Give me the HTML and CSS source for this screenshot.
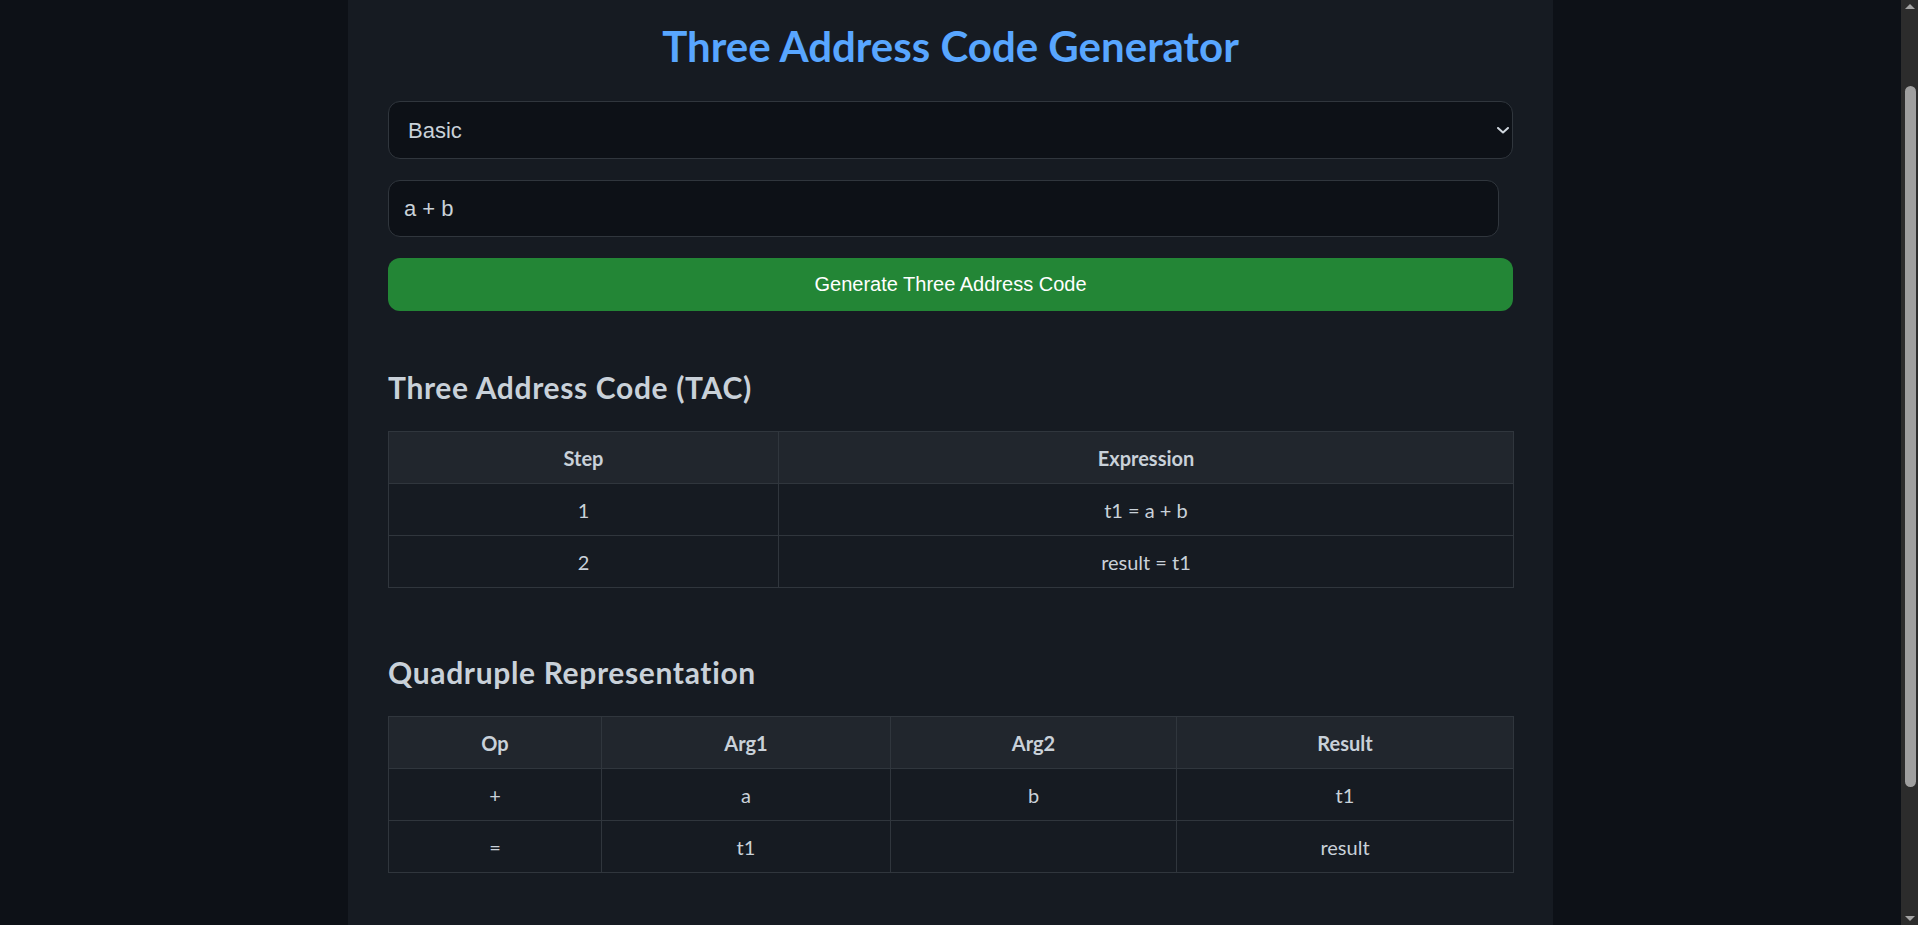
FILE: index.html
```html
<!DOCTYPE html>
<html lang="en">
<head>
<meta charset="utf-8">
<title>Three Address Code Generator</title>
<link rel="stylesheet" href="styles.css">
</head>
<body>
<div class="container">
  <h1 class="title">Three Address Code Generator</h1>

  <div class="select-wrap">
    <select class="mode-select">
      <option selected>Basic</option>
      <option>Arithmetic</option>
      <option>Conditional</option>
      <option>Loop</option>
    </select>
    <svg class="select-arrow" width="12" height="7" viewBox="0 0 12 7" aria-hidden="true">
      <polyline points="1,1 6,5.5 11,1" fill="none" stroke="#d0d7de" stroke-width="2" stroke-linecap="round" stroke-linejoin="round"/>
    </svg>
  </div>

  <input class="expr-input" type="text" value="a + b">

  <button class="generate-btn" type="button">Generate Three Address Code</button>

  <section class="result-section">
    <h2 class="section-title">Three Address Code (TAC)</h2>
    <table class="data-table">
      <colgroup>
        <col class="col-step">
        <col class="col-expr">
      </colgroup>
      <thead>
        <tr><th>Step</th><th>Expression</th></tr>
      </thead>
      <tbody>
        <tr><td>1</td><td>t1 = a + b</td></tr>
        <tr><td>2</td><td>result = t1</td></tr>
      </tbody>
    </table>
  </section>

  <section class="result-section">
    <h2 class="section-title">Quadruple Representation</h2>
    <table class="data-table">
      <colgroup>
        <col class="col-op">
        <col class="col-arg1">
        <col class="col-arg2">
        <col class="col-result">
      </colgroup>
      <thead>
        <tr><th>Op</th><th>Arg1</th><th>Arg2</th><th>Result</th></tr>
      </thead>
      <tbody>
        <tr><td>+</td><td>a</td><td>b</td><td>t1</td></tr>
        <tr><td>=</td><td>t1</td><td></td><td>result</td></tr>
      </tbody>
    </table>
  </section>
</div>

<div class="scrollbar" aria-hidden="true">
  <div class="sb-btn sb-up"><span class="sb-tri-up"></span></div>
  <div class="sb-track"><div class="sb-thumb"></div></div>
  <div class="sb-btn sb-down"><span class="sb-tri-down"></span></div>
</div>
</body>
</html>
```

FILE: styles.css
```css
html {
  background: #0d1117;
}

body {
  margin: 0;
  padding-right: 17px;
  background: #0d1117;
  color: #c9d1d9;
  font-family: Lato, "Open Sans", sans-serif;
}

.container {
  width: 1125px;
  margin: 0 auto;
  padding: 21px 40px 80px;
  background: #161b22;
}

.title {
  margin: 0 0 30px;
  font-size: 42px;
  line-height: 50px;
  font-weight: 700;
  color: #58a6ff;
  text-align: center;
}

.select-wrap {
  position: relative;
  margin-bottom: 21px;
}

.mode-select {
  display: block;
  box-sizing: border-box;
  width: 100%;
  height: 58px;
  padding: 0 15px 0 19px;
  border: 1px solid #30363d;
  border-radius: 12px;
  background: #0d1117;
  color: #c9d1d9;
  font-family: "Liberation Sans", Arial, sans-serif;
  font-size: 22px;
  -webkit-appearance: none;
  appearance: none;
  outline: none;
}

.select-arrow {
  position: absolute;
  right: 4px;
  top: 26px;
  pointer-events: none;
}

.expr-input {
  display: block;
  box-sizing: border-box;
  width: calc(100% - 14px);
  height: 57px;
  margin: 0 0 21px;
  padding: 0 15px;
  border: 1px solid #30363d;
  border-radius: 12px;
  background: #0d1117;
  color: #c9d1d9;
  font-family: "Liberation Sans", Arial, sans-serif;
  font-size: 22px;
  outline: none;
}

.generate-btn {
  display: block;
  box-sizing: border-box;
  width: 100%;
  height: 53px;
  padding: 0;
  border: none;
  border-radius: 12px;
  background: #238636;
  color: #ffffff;
  font-family: "Liberation Sans", Arial, sans-serif;
  font-size: 20px;
  cursor: pointer;
}

.result-section {
  margin-top: 59px;
}

.result-section + .result-section {
  margin-top: 67px;
}

.section-title {
  margin: 0 0 27px;
  font-size: 30px;
  line-height: 34px;
  letter-spacing: 0.65px;
  font-weight: 700;
  color: #c9d1d9;
}

.data-table {
  width: 100%;
  table-layout: fixed;
  border-collapse: collapse;
  font-size: 20px;
  line-height: 27px;
  color: #c9d1d9;
}

.data-table th,
.data-table td {
  border: 1px solid #30363d;
  padding: 13px 12px 11px;
  text-align: center;
  font-weight: 400;
}

.data-table th {
  background: #21262d;
  font-weight: 700;
}

.data-table td {
  background: #161b22;
}

.col-step { width: 390px; }
.col-expr { width: 735px; }
.col-op { width: 213px; }
.col-arg1 { width: 289px; }
.col-arg2 { width: 286px; }
.col-result { width: 337px; }

/* decorative window scrollbar, drawn over the page edge */
.scrollbar {
  position: fixed;
  top: 0;
  right: 0;
  width: 17px;
  height: 100%;
  display: flex;
  flex-direction: column;
  background: #2c2c2c;
}

.sb-btn {
  height: 17px;
  display: flex;
  justify-content: center;
  flex: none;
}

.sb-up {
  align-items: flex-start;
  padding-top: 4px;
  box-sizing: border-box;
}

.sb-down {
  align-items: flex-start;
  padding-top: 8px;
  box-sizing: border-box;
}

.sb-tri-up {
  width: 0;
  height: 0;
  border-left: 5px solid transparent;
  border-right: 5px solid transparent;
  border-bottom: 5px solid #a3a3a3;
}

.sb-tri-down {
  width: 0;
  height: 0;
  border-left: 5px solid transparent;
  border-right: 5px solid transparent;
  border-top: 5px solid #a3a3a3;
}

.sb-track {
  flex: 1;
}

.sb-thumb {
  height: 701px;
  margin: 69px 2px 0 4px;
  border-radius: 6px;
  background: #9f9f9f;
}
```
